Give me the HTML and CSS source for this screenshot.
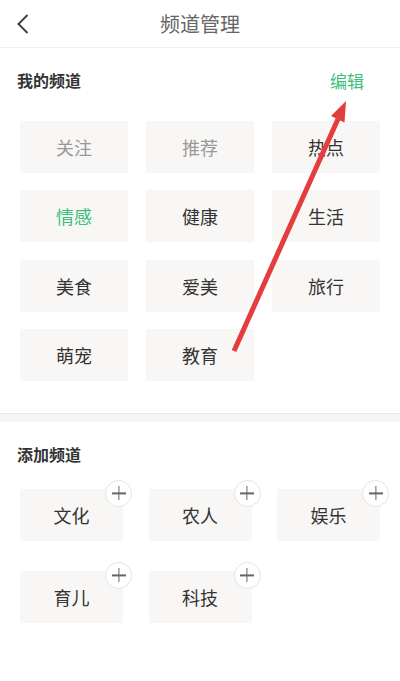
FILE: index.html
```html
<!DOCTYPE html>
<html lang="zh-CN">
<head>
  <meta charset="UTF-8">
  <title>频道管理</title>
  <link rel="stylesheet" href="styles.css">
</head>
<body>

<div class="page">
  <div class="header">
    <span class="back">
      <svg width="12" height="20" viewBox="0 0 12 20"><path d="M10.5 1 L1.5 10 L10.5 19" fill="none" stroke="#444" stroke-width="2"/></svg>
    </span>
    <h1>频道管理</h1>
  </div>

  <div class="section mine">
    <div class="section-title">
      <h2>我的频道</h2>
      <a class="edit">编辑</a>
    </div>
    <div class="tiles">
      <div class="tile fixed">关注</div>
      <div class="tile fixed">推荐</div>
      <div class="tile">热点</div>
      <div class="tile active">情感</div>
      <div class="tile">健康</div>
      <div class="tile">生活</div>
      <div class="tile">美食</div>
      <div class="tile">爱美</div>
      <div class="tile">旅行</div>
      <div class="tile">萌宠</div>
      <div class="tile">教育</div>
    </div>
  </div>

  <div class="divider"></div>

  <div class="section more">
    <div class="section-title">
      <h2>添加频道</h2>
    </div>
    <div class="tiles add-tiles">
      <div class="tile">文化<span class="plus"></span></div>
      <div class="tile">农人<span class="plus"></span></div>
      <div class="tile">娱乐<span class="plus"></span></div>
      <div class="tile">育儿<span class="plus"></span></div>
      <div class="tile">科技<span class="plus"></span></div>
    </div>
  </div>

  <!-- annotation arrow drawn over the screenshot -->
  <svg class="arrow" width="400" height="681" viewBox="0 0 400 681">
    <line x1="234" y1="351" x2="338" y2="119" stroke="#e43d3d" stroke-width="5"/>
    <polygon points="346,101 344.5,122.5 331,116" fill="#e43d3d"/>
  </svg>
</div>

</body>
</html>
```

FILE: styles.css
```css
body {
  margin: 0;
  font-family: "Noto Sans CJK SC", "Noto Sans", sans-serif;
  background: #fff;
  color: #333;
}
.page {
  position: relative;
  width: 400px;
  height: 681px;
  overflow: hidden;
}
.header {
  height: 47px;
  border-bottom: 1px solid #f0f0f0;
  display: flex;
  align-items: center;
  justify-content: center;
  position: relative;
}
.back {
  position: absolute;
  left: 17px;
  top: 14px;
  line-height: 0;
}
.header h1 {
  margin: 0;
  font-size: 20px;
  font-weight: normal;
  color: #666;
}
.section {
  padding: 20px 20px 0 20px;
}
.section-title {
  display: flex;
  justify-content: space-between;
  align-items: center;
  height: 24px;
  margin-left: -3px;
}
.section-title h2 {
  margin: 0;
  font-size: 16px;
  font-weight: bold;
  color: #333;
}
.edit {
  font-size: 17px;
  color: #3cbf7b;
  margin-right: 16px;
}
.tiles {
  display: grid;
  grid-template-columns: repeat(3, 108px);
  grid-auto-rows: 52px;
  column-gap: 18px;
  row-gap: 17.3px;
  margin-top: 29px;
}
.mine {
  padding-bottom: 32px;
}
.tile {
  position: relative;
  background: #f8f7f5;
  display: flex;
  align-items: center;
  justify-content: center;
  font-size: 18px;
  color: #333;
}
.tile.fixed {
  color: #999;
}
.tile.active {
  color: #3cbf7b;
}
.divider {
  height: 8px;
  border-top: 1px solid #e8e8e8;
  background: #f5f5f5;
}
.add-tiles {
  grid-template-columns: repeat(3, 103px);
  column-gap: 25.5px;
  row-gap: 30px;
  margin-top: 23px;
}
.plus {
  position: absolute;
  top: -9px;
  right: -9px;
  width: 25px;
  height: 25px;
  border: 1px solid #e4e4e4;
  border-radius: 50%;
  background: #fff;
}
.plus::before,
.plus::after {
  content: "";
  position: absolute;
  background: #666;
  left: 50%;
  top: 50%;
}
.plus::before {
  width: 14px;
  height: 1.2px;
  transform: translate(-50%, -50%);
}
.plus::after {
  width: 1.2px;
  height: 14px;
  transform: translate(-50%, -50%);
}
.arrow {
  position: absolute;
  left: 0;
  top: 0;
  pointer-events: none;
}
```
